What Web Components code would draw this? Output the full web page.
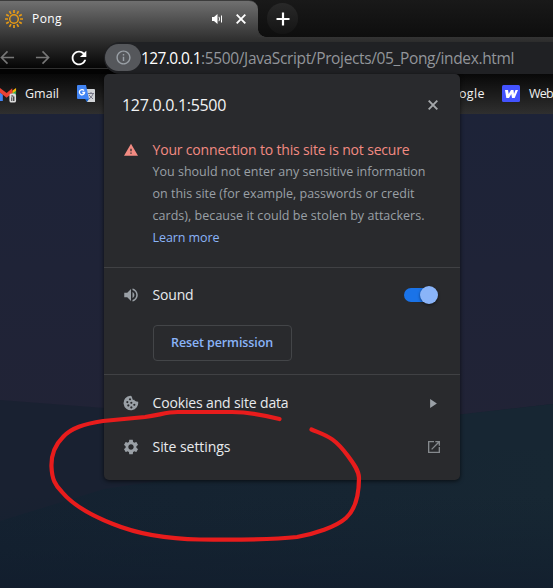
<!DOCTYPE html>
<html lang="en"><head><meta charset="utf-8"><title>Pong</title>
<style>html,body{margin:0;width:553px;height:588px;overflow:hidden;background:#1f2435}</style></head>
<body><browser-window></browser-window>
<script>
function define(name, html, ready){
  const t=document.createElement('template'); t.innerHTML=html;
  customElements.define(name, class extends HTMLElement{
    connectedCallback(){ if(this.shadowRoot) return;
      this.attachShadow({mode:'open'}).append(t.content.cloneNode(true));
      if(ready) ready(this); }
  });
}
// A single line of text spaced to the width given in "w".
define('ui-text','<style>:host{display:block;white-space:nowrap;line-height:22px}span{display:inline-block}</style><span><slot></slot></span>',el=>{
  const s=el.shadowRoot.querySelector('span'), w=+el.getAttribute('w');
  if(w) s.style.letterSpacing=((w-s.getBoundingClientRect().width)/el.textContent.length)+'px';
});
const icons={
sun:['18','<g fill="none" stroke="#e79a14"><circle cx="9" cy="9" r="4.3" stroke-width="1.5"/><path stroke-width="1.7" d="M9 0v3M9 15v3M0 9h3M15 9h3M4.500 1.200l1.500 2.600M12 14.200l1.500 2.600M1.200 4.500l2.600 1.500M14.200 12l2.600 1.500M4.500 16.800l1.500-2.600M12 3.800l1.500-2.600M1.200 13.500l2.600-1.500M14.200 6l2.600-1.500"/></g>'],
sound:['24','<path fill="currentColor" d="M3 9v6h4l5 5V4L7 9H3zm13.5 3c0-1.77-1.02-3.29-2.5-4.03v8.05c1.48-.73 2.5-2.25 2.5-4.02zM14 3.23v2.06c2.89.86 5 3.54 5 6.71s-2.11 5.85-5 6.71v2.06c4.01-.91 7-4.49 7-8.77s-2.99-7.86-7-8.77z"/>'],
tabsound:['12','<path fill="#fff" d="M1 4v4h2l3.500 3V1L3 4z"/><path fill="none" stroke="#fff" d="M8 3.8q1 2.2 0 4.4M10.5 2.5v7"/>'],
close:['10','<path fill="none" stroke="currentColor" stroke-width="1.9" d="M.7.7l8.6 8.6M9.3.7L.7 9.3"/>'],
plus:['14','<path stroke="#fff" stroke-width="2.2" d="M7 .5v13M.5 7h13"/>'],
back:['16','<path fill="none" stroke="#777" stroke-width="1.7" d="M8 1.5L1.5 8 8 14.5M1.5 8H15"/>'],
fwd:['16','<path fill="none" stroke="#777" stroke-width="1.7" d="M8 1.5L14.5 8 8 14.5M14.5 8H1"/>'],
reload:['24','<path fill="#fff" d="M17.65 6.35C16.2 4.9 14.21 4 12 4c-4.42 0-7.99 3.58-7.99 8s3.57 8 7.99 8c3.73 0 6.84-2.55 7.73-6h-2.08c-.82 2.33-3.04 4-5.65 4-3.31 0-6-2.69-6-6s2.69-6 6-6c1.66 0 3.14.69 4.22 1.78L13 11h7V4l-2.35 2.35z"/>'],
info:['24','<path fill="#9aa0a6" d="M11 7h2v2h-2zm0 4h2v6h-2zm1-9C6.48 2 2 6.48 2 12s4.48 10 10 10 10-4.48 10-10S17.52 2 12 2zm0 18c-4.41 0-8-3.59-8-8s3.59-8 8-8 8 3.59 8 8-3.59 8-8 8z"/>'],
warn:['22','<path fill="#f28b82" d="M0 20h22L11 1 0 20zm12-3h-2v-2h2v2zm0-4h-2V9h2v4z"/>'],
cookie:['24','<path fill="#9aa0a6" fill-rule="evenodd" d="M11 1C13 1 13.500 3 14 5c0 1.600 1 2.500 3 2.300 0 1.700 2 2.700 5.700 2.900A11 11 0 1 1 11 1zM10.500 4.700a1.600 1.600 0 1 0 .01 0zM6.500 9a1.600 1.600 0 1 0 .01 0zM12.500 10a1.600 1.600 0 1 0 .01 0zM8 14a1.600 1.600 0 1 0 .01 0zM17 13a1.600 1.600 0 1 0 .01 0zM12.500 17a1.600 1.600 0 1 0 .01 0z"/>'],
gear:['24','<path fill="#9aa0a6" d="M19.140 12.940c.04-.3.060-.61.060-.94 0-.32-.02-.64-.07-.94l2.030-1.580c.18-.14.230-.41.120-.61l-1.920-3.320c-.12-.22-.37-.29-.59-.22l-2.390.96c-.5-.38-1.030-.7-1.620-.94l-.36-2.540c-.04-.24-.24-.41-.48-.41h-3.840c-.24 0-.43.170-.47.410l-.36 2.540c-.59.240-1.130.570-1.620.940l-2.390-.96c-.22-.08-.47 0-.59.220L2.740 8.870c-.12.210-.08.470.120.610l2.030 1.580c-.05.300-.09.630-.09.940s.020.640.070.940l-2.030 1.580c-.18.140-.23.410-.12.610l1.920 3.320c.12.220.370.290.590.220l2.390-.96c.5.380 1.030.700 1.620.940l.36 2.540c.05.240.240.410.480.410h3.840c.24 0 .44-.17.470-.41l.36-2.540c.59-.24 1.130-.56 1.620-.94l2.390.960c.22.080.470 0 .59-.22l1.920-3.320c.12-.22.070-.47-.12-.61l-2.010-1.580zM12 15.600c-1.980 0-3.600-1.620-3.600-3.600s1.620-3.600 3.600-3.600 3.600 1.620 3.600 3.600-1.620 3.600-3.600 3.600z"/>'],
arrow:['8','<path fill="#9aa0a6" d="M1 0l6 4-6 4z"/>'],
open:['24','<path fill="#85898d" d="M19 19H5V5h7V3H3v18h18v-9h-2v7zM14 3v2h3.590l-9.830 9.830 1.410 1.410L19 6.410V10h2V3h-7z"/>'],
gmail:['18','<path fill="#4285f4" d="M0 7l3 2v7H0z"/><path fill="#fbbc04" d="M13 5l4-3v5l-4 3z"/><path fill="#ea4335" d="M0 2l7 5.500 6-5v5L7 12.500 0 7z"/><path fill="#34a853" d="M13 8l4-3v4h-4z"/><rect x="10" y="8" width="7" height="9.500" rx="2" fill="#ddd"/><path fill="#222" d="M12 10h2v1h-2zM12 12h1v4h-1zM14 11h1.200v5H14z"/>'],
translate:['18','<path fill="#d2d5d8" d="M8 4h9q1 0 1 1v12H10z"/><path fill="none" stroke="#778" d="M11 8.500h6M14 7v1.500M12 14q3-2 4-5M12 10l4 4"/><path fill="#4285f4" d="M1 0h8l3 14H1q-1 0-1-1V1q0-1 1-1z"/><path fill="#1967d2" d="M8 14h4l-2 3z"/><path fill="none" stroke="#fff" stroke-width="1.300" d="M7 5.500A2.600 2.600 0 1 0 7.600 7.500H5.300"/>'],
web:['18','<rect width="18" height="17" rx="1.500" fill="#4353ff"/><path fill="#fff" d="M3 5h3l.7 4L9 5h2.500l.5 4 1.500-4H16l-3.300 8H10l-.7-4L7 13H4.300z"/>']
};
define('ui-icon','<style>:host{display:block;flex:none}svg{display:block;width:100%;height:100%}</style><svg></svg>',el=>{
  const i=icons[el.getAttribute('name')], s=el.shadowRoot.querySelector('svg');
  s.setAttribute('viewBox',`0 0 ${i[0]} ${i[0]}`); s.innerHTML=i[1];
  const z=el.getAttribute('size')+'px'; el.style.width=z; el.style.height=z;
});
define('tab-strip',`<style>
:host{display:flex;height:37px;background:linear-gradient(#191919,#0e0e0e)}
.tab{box-sizing:border-box;width:258px;display:flex;align-items:center;padding:0 12px 0 5px;border-top:1px solid #3c3c3c;border-radius:0 9px 0 0;background:linear-gradient(#707070,#343434);color:#fff;font-size:12px}
ui-text{margin-left:9px;flex:1}
.tab ui-icon:last-child{margin-left:13px}
.flare{width:8px;background:radial-gradient(circle at 100% 0,transparent 7.500px,#373737 8px);height:8px;align-self:end}
.new{width:31px;height:31px;border-radius:50%;margin:3px 0 0 1px;background:linear-gradient(#292929,#141414);display:grid;place-items:center}
</style><div class="tab"><ui-icon name="sun" size="18"></ui-icon><ui-text w="30">Pong</ui-text><ui-icon name="tabsound" size="12"></ui-icon><ui-icon name="close" size="10"></ui-icon></div><div class="flare"></div><div class="new"><ui-icon name="plus" size="14"></ui-icon></div>`);
define('tool-bar',`<style>
:host{display:flex;height:37px;box-sizing:border-box;background:linear-gradient(#343434,#050505 31px,#303030 31px,#303030 32px,#030303 32px)}
.nav{width:104px;display:flex;align-items:center;height:41px}
.nav ui-icon:nth-child(2){margin-left:20px}.nav ui-icon:nth-child(3){margin-left:18px}
.field{flex:1;height:32px;margin-top:5px;background:#202124;border-radius:16px 0 0 16px;display:flex;align-items:center;font-size:15.500px;color:#92959a}
.chip{width:36px;height:27px;border-radius:14px;background:#55575b;display:grid;place-items:center;margin:-1px 0 0 1px}
ui-text{margin-top:-1px}
.host{color:#fff}
</style><div class="nav"><ui-icon name="back" size="15"></ui-icon><ui-icon name="fwd" size="15"></ui-icon><ui-icon name="reload" size="22"></ui-icon></div><div class="field"><div class="chip"><ui-icon name="info" size="17"></ui-icon></div><ui-text class="host" w="60">127.0.0.1</ui-text><ui-text w="313">:5500/JavaScript/Projects/05_Pong/index.html</ui-text></div>`);
define('bookmark-bar',`<style>
:host{display:flex;height:40px;background:linear-gradient(#080808,#2f2f2f);align-items:center;color:#f1f1f1;font-size:12.500px;box-sizing:border-box}
.a{margin-left:8px}.t{margin-left:18px}.g{margin-left:356px}.w{margin-left:17px}.l{margin-left:9px}
</style><ui-icon name="gmail" size="17"></ui-icon><ui-text class="a" w="34">Gmail</ui-text><ui-icon class="t" name="translate" size="18"></ui-icon><ui-text class="g" w="34">oogle</ui-text><ui-icon class="w" name="web" size="18"></ui-icon><ui-text class="l" w="24">Web</ui-text>`);
define('page-art',`<style>:host{display:block;flex:1;min-height:0}svg{display:block}</style>
<svg width="553" height="474" viewBox="0 114 553 474"><defs><linearGradient id="g" x2="1"><stop stop-color="#142130"/><stop offset="1" stop-color="#172733"/></linearGradient><linearGradient id="b" x2="0" y2="1"><stop offset=".5" stop-color="#122230" stop-opacity="0"/><stop offset="1" stop-color="#111c2c" stop-opacity=".7"/></linearGradient><linearGradient id="t" x2="0" y2="1"><stop stop-color="#1d2338"/><stop offset="1" stop-color="#212336"/></linearGradient></defs>
<path fill="url(#t)" d="M0 114h553v310H0z"/><path fill="#192131" d="M0 400L104 408 460 415 553 404V588H0z"/><path fill="url(#g)" d="M0 521L104 489 430 440 553 441V588H0z"/><path fill="#172633" d="M455 415L553 404V450H455z"/><path fill="url(#b)" d="M0 400L104 408 460 415 553 404V588H0z"/></svg>`);
define('toggle-switch',`<style>:host{display:flex;align-items:center;justify-content:flex-end;width:33px;height:14px;border-radius:7px;background:#1a73e8}
i{flex:none;width:18px;height:18px;border-radius:50%;background:#8ab4f8;box-shadow:0 1px 3px #0008;margin-right:-1px}</style><i></i>`);
define('info-row',`<style>:host{display:flex;align-items:center;height:44px;padding:0 18px;color:#e8eaed;font-size:14px}
.icon{width:18px;display:grid;place-items:center}
.mid{flex:1;margin:-1px 0 0 12.500px}</style><div class="icon"><slot name="icon"></slot></div><div class="mid"><slot></slot></div><slot name="end"></slot>`);
define('site-popup',`<style>
:host{display:block;box-sizing:border-box;width:356px;height:406px;background:#292a2d;border-radius:5px;box-shadow:0 1px 4px #000a;color:#e8eaed}
header{display:flex;justify-content:space-between;align-items:center;height:61px;padding:0 22px 1px 18px;font-size:16px;color:#f1f3f4}
header ui-icon{color:#a5a8ab}
.warning{display:flex;height:131px;padding-left:20px;border-bottom:1px solid #404144;box-sizing:content-box}
.warning>ui-icon{margin:7px 14.500px 0 0}
.copy{padding-top:3px;font-size:12.500px;color:#9aa0a6}
.red{font-size:14px;color:#f28b82}.link{color:#8ab4f8}
.permission{height:107px;border-bottom:1px solid #404144;box-sizing:border-box}
.permission info-row{height:54px}
toggle-switch{margin-right:5px;margin-top:-1px}
button{display:block;width:139px;height:36px;margin:3px 0 0 49px;padding:0 1px 0 0;border:1px solid #434548;border-radius:4px;background:none;color:#8ab4f8;font:600 12.500px "Open Sans",sans-serif}
.links{padding-top:6px}.sound{color:#9aa0a6}.arrow{margin-right:4px}
</style><header><ui-text w="104">127.0.0.1:5500</ui-text><ui-icon name="close" size="10"></ui-icon></header>
<section class="warning"><ui-icon name="warn" size="14"></ui-icon><div class="copy"><ui-text class="red" w="257">Your connection to this site is not secure</ui-text><ui-text w="273">You should not enter any sensitive information</ui-text><ui-text w="262">on this site (for example, passwords or credit</ui-text><ui-text w="272">cards), because it could be stolen by attackers.</ui-text><ui-text class="link" w="67">Learn more</ui-text></div></section>
<section class="permission"><info-row><ui-icon slot="icon" class="sound" name="sound" size="18"></ui-icon><ui-text w="41">Sound</ui-text><toggle-switch slot="end"></toggle-switch></info-row><button><ui-text w="102">Reset permission</ui-text></button></section>
<section class="links"><info-row><ui-icon slot="icon" name="cookie" size="16"></ui-icon><ui-text w="136">Cookies and site data</ui-text><ui-icon class="arrow" slot="end" name="arrow" size="9"></ui-icon></info-row><info-row><ui-icon slot="icon" name="gear" size="18"></ui-icon><ui-text w="78">Site settings</ui-text><ui-icon slot="end" name="open" size="16"></ui-icon></info-row></section>`);
define('red-loop',`<style>:host{display:block;pointer-events:none}svg{display:block}</style><svg width="553" height="588"><path fill="none" stroke="#e81c1c" stroke-width="4.200" stroke-linecap="round" stroke-linejoin="round" d="M279.500 419Q252 412 232 412H178C166 412 160 415 145 417L103 421C84 424 71 428 63 437C54 446 51 455 51.500 467C52 479 55 485 62 492C72 504 90 515 113 524C140 535 168 539 200 539.500C240 540 270 540 297 537C314 534 336 527 346 518C357 508 359 492 359 478C359 471 354 464 348 456C334 437 327 436 311.500 429.500"/></svg>`);
define('browser-window',`<style>
:host{position:relative;display:flex;flex-direction:column;width:553px;height:588px;overflow:hidden;font-family:"Open Sans","Noto Sans",sans-serif}
site-popup{position:absolute;left:104px;top:74px}red-loop{position:absolute;left:0;top:0}
</style><tab-strip></tab-strip><tool-bar></tool-bar><bookmark-bar></bookmark-bar><page-art></page-art><site-popup></site-popup><red-loop></red-loop>`);
</script></body></html>
